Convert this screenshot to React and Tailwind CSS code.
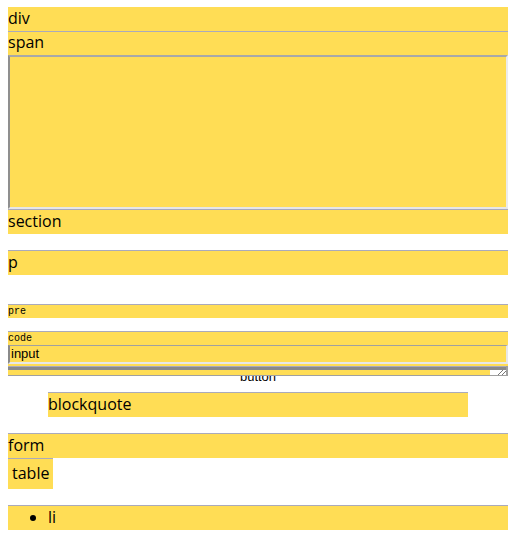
export default function App() {
  return (
    <div className="min-h-[538px] bg-white pt-[7px] pl-[8px] text-black font-['Open_Sans',sans-serif] text-[16px]">
      <div className="w-[500px] h-[24px] leading-[23px] bg-[#ffdd55]">div</div>
      <div className="w-[500px] h-[24px] leading-[21px] bg-[#ffdd55] border-t border-[#aaaabb]">span</div>
      <div className="w-[500px] h-[154px] bg-[#ffdd55] border-l-2 border-t-2 border-r-2 border-b-2 border-l-[#8f8f8f] border-t-[#a8a8a8] border-r-[#ececec] border-b-[#e6e6e6]"></div>
      <div className="w-[500px] h-[25px] leading-[22px] bg-[#ffdd55] border-t border-[#aaaabb]">section</div>
      <div className="w-[500px] h-[25px] leading-[22px] bg-[#ffdd55] border-t border-[#aaaabb] mt-[16px]">p</div>
      <div className="w-[500px] h-[14px] leading-[13px] bg-[#ffdd55] border-t border-[#aaaabb] mt-[29px] font-['Liberation_Mono',monospace] text-[10px]">pre</div>
      <div className="w-[500px] h-[14px] leading-[13px] bg-[#ffdd55] border-t border-[#aaaabb] mt-[13px] font-['Liberation_Mono',monospace] text-[10px]">code</div>
      <div className="w-[500px] h-[19px] leading-[16px] bg-[#ffdd55] border-t border-l-2 border-r-2 border-b-2 border-t-[#a0a0a0] border-l-[#8a8a8a] border-r-[#e8e8e8] border-b-[#e8e8e8] pl-px font-['Liberation_Sans',sans-serif] text-[13px]">input</div>
      <div className="w-[500px] h-[2px] bg-[#ffdd55]"></div>
      <div className="w-[500px] h-[10px] flex flex-col border-r-2 border-r-[#a0a0a0]">
        <div className="h-px bg-[#aaaabb]"></div>
        <div className="h-[3px] bg-[#8a8a8a]"></div>
        <div className="flex h-[5px]">
          <div className="flex-1 bg-[#ffdd55]"></div>
          <div className="w-[16px] bg-white flex items-end justify-end">
            <svg width="14" height="5" viewBox="0 0 14 5">
              <line x1="6" y1="5" x2="11" y2="0" stroke="#777" strokeWidth="1" />
              <line x1="10" y1="5" x2="14" y2="1" stroke="#777" strokeWidth="1" />
            </svg>
          </div>
        </div>
        <div className="h-px bg-[#a0a0a0]"></div>
      </div>
      <div className="w-[500px] h-[7px] overflow-hidden">
        <div className="-mt-[7px] text-center leading-[15px] font-['Liberation_Sans',sans-serif] text-[13px]">button</div>
      </div>
      <div className="w-[420px] ml-[40px] h-[25px] leading-[22px] bg-[#ffdd55] border-t border-[#aaaabb] mt-[9px]">blockquote</div>
      <div className="w-[500px] h-[25px] leading-[22px] bg-[#ffdd55] border-t border-[#aaaabb] mt-[16px]">form</div>
      <div className="w-[45px] h-[31px] leading-[28px] bg-[#ffdd55] border-t border-[#aaaabb] pl-[4px]">table</div>
      <div className="w-[500px] h-[25px] leading-[22px] bg-[#ffdd55] border-t border-[#aaaabb] mt-[16px] flex items-center">
        <span className="ml-[22px] w-[6px] h-[6px] rounded-full bg-black"></span>
        <span className="ml-[12px] -mt-[2px]">li</span>
      </div>
    </div>
  );
}
